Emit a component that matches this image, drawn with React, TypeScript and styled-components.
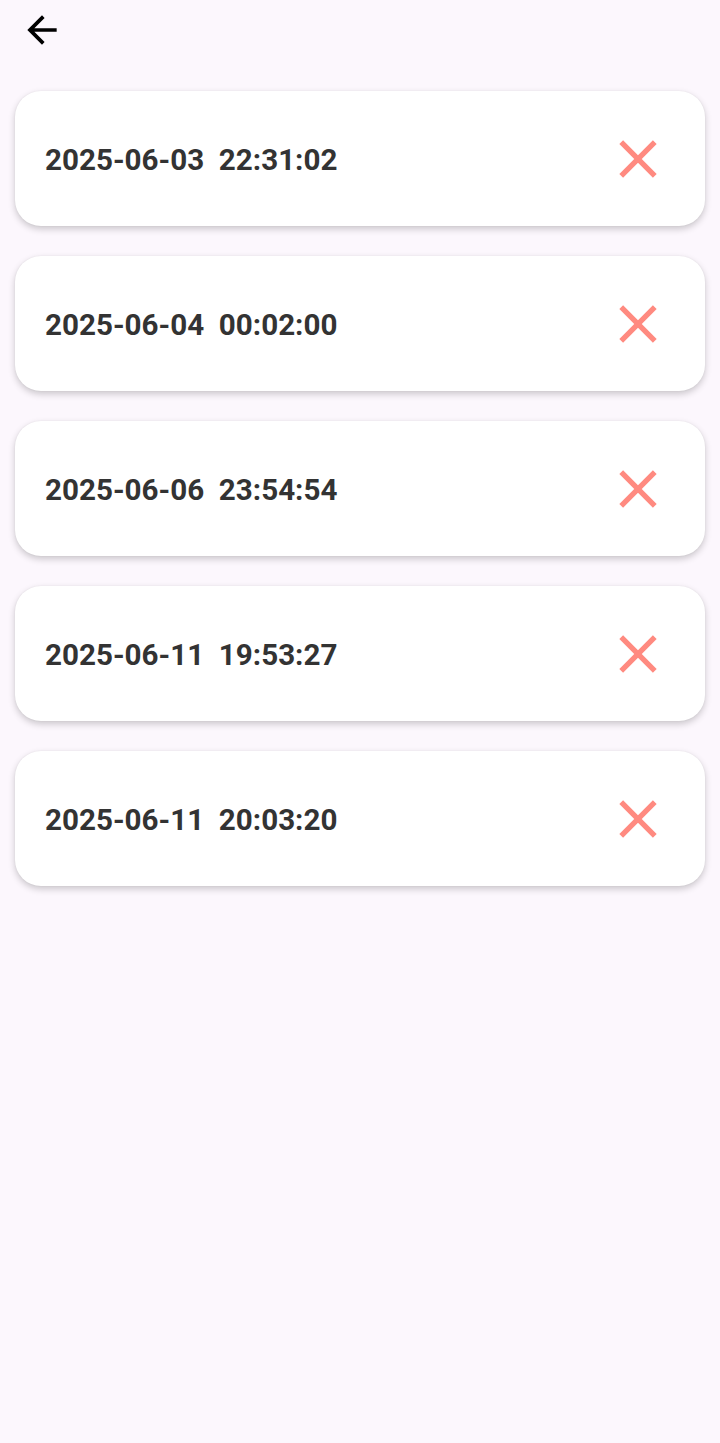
import React from "react";
import styled, { createGlobalStyle } from "styled-components";

const Global = createGlobalStyle`
  html, body {
    margin: 0;
    padding: 0;
    background: #fcf7fd;
  }
  body {
    font-family: Roboto, "Noto Sans", sans-serif;
  }
`;

const Page = styled.div`
  min-height: 1443px;
  background: #fcf7fd;
  display: flex;
  flex-direction: column;
`;

const TopBar = styled.div`
  height: 91px;
  display: flex;
  align-items: flex-start;
  padding: 8px 0 0 20px;
  box-sizing: border-box;
`;

const BackButton = styled.button`
  width: 44px;
  height: 44px;
  padding: 0;
  border: none;
  background: transparent;
  display: flex;
  align-items: center;
  justify-content: center;
  color: #000;
  cursor: pointer;
`;

const List = styled.div`
  display: flex;
  flex-direction: column;
  gap: 30px;
  padding: 0 15px;
`;

const Card = styled.div`
  height: 135px;
  background: #ffffff;
  border-radius: 26px;
  box-shadow: 0 3px 7px rgba(0, 0, 0, 0.2), 0 0 2px rgba(0, 0, 0, 0.06);
  display: flex;
  align-items: center;
  justify-content: space-between;
  padding: 0 35px 0 30px;
  box-sizing: border-box;
`;

const DateText = styled.span`
  font-family: Roboto, sans-serif;
  font-weight: 700;
  font-size: 29.6px;
  color: #333333;
  white-space: pre;
  padding-top: 2px;
`;

const DeleteButton = styled.button`
  width: 64px;
  height: 64px;
  padding: 0;
  border: none;
  background: transparent;
  display: flex;
  align-items: center;
  justify-content: center;
  color: #ff8a80;
  cursor: pointer;
`;

const ArrowBack = () => (
  <svg width="44" height="44" viewBox="0 0 24 24" fill="currentColor">
    <path d="M20 11H7.83l5.59-5.59L12 4l-8 8 8 8 1.41-1.41L7.83 13H20v-2z" />
  </svg>
);

const CloseIcon = () => (
  <svg width="64" height="64" viewBox="0 0 24 24" fill="currentColor">
    <path d="M19 6.41L17.59 5 12 10.59 6.41 5 5 6.41 10.59 12 5 17.59 6.41 19 12 13.41 17.59 19 19 17.59 13.41 12z" />
  </svg>
);

const entries = [
  "2025-06-03  22:31:02",
  "2025-06-04  00:02:00",
  "2025-06-06  23:54:54",
  "2025-06-11  19:53:27",
  "2025-06-11  20:03:20",
];

export default function App() {
  return (
    <>
      <Global />
      <Page>
        <TopBar>
          <BackButton aria-label="back">
            <ArrowBack />
          </BackButton>
        </TopBar>
        <List>
          {entries.map((e) => (
            <Card key={e}>
              <DateText>{e}</DateText>
              <DeleteButton aria-label="delete">
                <CloseIcon />
              </DeleteButton>
            </Card>
          ))}
        </List>
      </Page>
    </>
  );
}
